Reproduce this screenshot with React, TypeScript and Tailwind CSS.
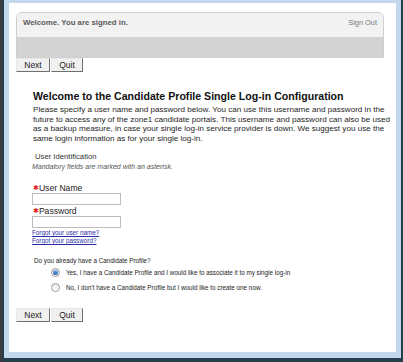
import React from 'react';

const font = { fontFamily: '"Liberation Sans", Arial, sans-serif' };

const NavButtons: React.FC<{ className?: string }> = ({ className = '' }) => (
  <div className={`flex ml-[7px] ${className}`}>
    <button
      type="button"
      className="w-[34px] h-[14px] bg-[#f0f0f0] border border-t-[#e8e8e8] border-l-[#e8e8e8] border-r-[#6f6f6f] border-b-[#6f6f6f] text-[8.5px] leading-none text-[#222]"
    >
      Next
    </button>
    <button
      type="button"
      className="ml-px w-[32px] h-[14px] bg-[#f0f0f0] border border-t-[#e8e8e8] border-l-[#e8e8e8] border-r-[#6f6f6f] border-b-[#6f6f6f] text-[8.5px] leading-none text-[#222]"
    >
      Quit
    </button>
  </div>
);

const Radio: React.FC<{ checked?: boolean }> = ({ checked }) => (
  <span className="w-[9px] h-[9px] rounded-full border border-[#9a9a9a] bg-gradient-to-b from-[#e6e6e6] to-[#ffffff] flex items-center justify-center shrink-0">
    {checked && <span className="w-[5px] h-[5px] rounded-full bg-gradient-to-b from-[#7fb2e8] to-[#1b5fb0]" />}
  </span>
);

const Star = () => (
  <span className="text-[#e0201c] text-[7px] align-[1px]" style={{ fontFamily: '"DejaVu Sans", sans-serif' }}>
    ✱
  </span>
);

export default function App() {
  return (
    <div style={font} className="w-[403px] h-[362px] bg-[#24404c] pl-[2px] pr-[2px] pb-[4px] border-l-2 border-[#3c3c3c]">
      <div className="w-full h-full bg-[#c4d8ed] pt-[3px] pl-[5px] pr-[5px] pb-[6px]">
        <div className="w-full h-full bg-white pt-[9px]">
          {/* Signed in header */}
          <div className="ml-[7px] w-[368px] rounded-t-[6px] border border-[#cfcfcf] overflow-hidden">
            <div className="h-[24px] bg-[#f2f2f2] flex justify-between items-start pt-[4px] pl-[6px] pr-[6px]">
              <span className="text-[7.8px] font-bold text-[#5a5a5a]">Welcome. You are signed in.</span>
              <span className="text-[7.4px] text-[#7a7a7a]">Sign Out</span>
            </div>
            <div className="h-[20px] bg-[#d3d3d3]" />
          </div>

          <NavButtons />

          <div className="pl-[24px] text-[#1e1e1e]">
            <h1 className="mt-[18px] text-[10.6px] leading-[12px] font-bold text-[#111]">
              Welcome to the Candidate Profile Single Log-in Configuration
            </h1>
            <p className="mt-[3px] text-[8.1px] leading-[9.7px] whitespace-nowrap">
              Please specify a user name and password below. You can use this username and password in the
              <br />
              future to access any of the zone1 candidate portals. This username and password can also be used
              <br />
              as a backup measure, in case your single log-in service provider is down. We suggest you use the
              <br />
              same login information as for your single log-in.
            </p>

            <div className="mt-[8px] ml-[2px] text-[7.7px] leading-[10px] text-[#333]">User Identification</div>
            <div className="-ml-px text-[7px] leading-[9px] italic text-[#555]">
              Mandatory fields are marked with an asterisk.
            </div>

            <label className="block mt-[13px] text-[8.6px] leading-[9px] text-[#222]">
              <Star />User Name
            </label>
            <input className="block -ml-px w-[89px] h-[12px] border border-[#bdbdbd] bg-white" />

            <label className="block mt-[2px] text-[8.6px] leading-[9px] text-[#222]">
              <Star />Password
            </label>
            <input type="password" className="block -ml-px w-[89px] h-[12px] border border-[#bdbdbd] bg-white" />

            <div className="-ml-px mt-[1px] flex flex-col items-start">
              <a href="#" className="text-[6.3px] leading-[8px] text-[#2b2ba6] underline">Forgot your user name?</a>
              <a href="#" className="text-[6.3px] leading-[8px] text-[#2b2ba6] underline">Forgot your password?</a>
            </div>

            <div className="mt-[12px] ml-px text-[6.3px] leading-[8px] text-[#222]">
              Do you already have a Candidate Profile?
            </div>
            <div className="mt-[2px] ml-[18px] flex flex-col gap-[3px] text-[6.3px] text-[#222]">
              <div className="h-[12px] flex items-center gap-[6px]">
                <Radio checked />
                <span>Yes, I have a Candidate Profile and I would like to associate it to my single log-in</span>
              </div>
              <div className="h-[12px] flex items-center gap-[6px]">
                <Radio />
                <span>No, I don't have a Candidate Profile but I would like to create one now.</span>
              </div>
            </div>
          </div>

          <NavButtons className="mt-[14px]" />
        </div>
      </div>
    </div>
  );
}
